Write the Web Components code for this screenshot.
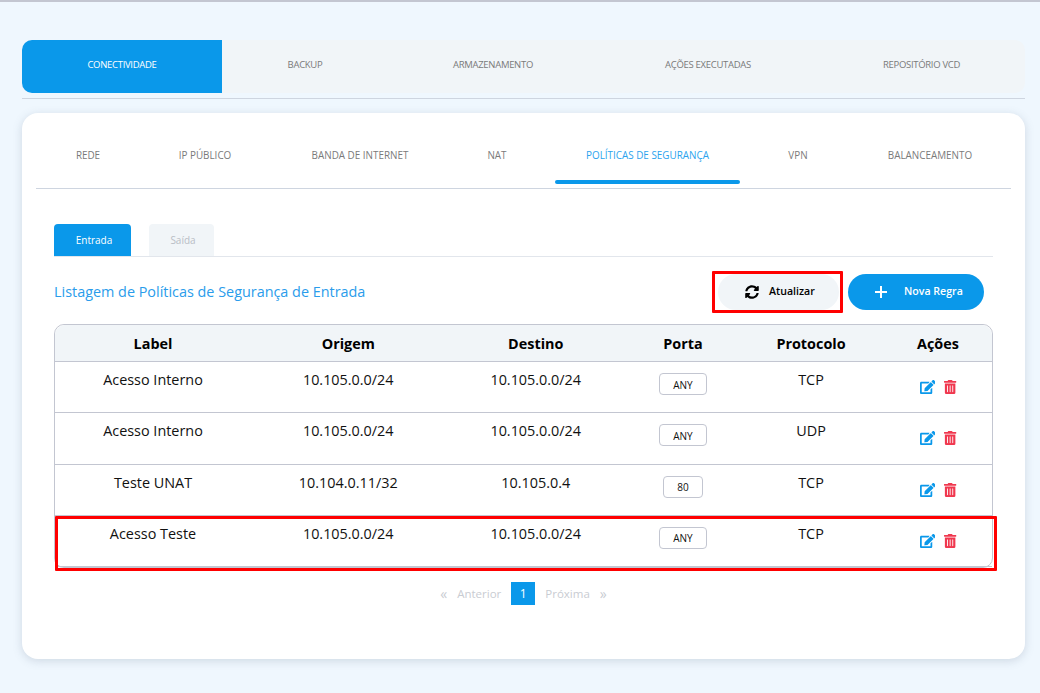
<!DOCTYPE html>
<html lang="pt-BR">
<head>
<meta charset="utf-8">
<title>Políticas de Segurança</title>
<style>
html, body { margin: 0; height: 100%; }
body { background: #eff7fe; font-family: "Open Sans", sans-serif; overflow: hidden; }
</style>
</head>
<body>
<app-shell>
    <main-tabs></main-tabs>
    <panel-card>
        <sub-tabs></sub-tabs>
        <div style="margin: 35px 18px 0 18px;">
            <mode-tabs></mode-tabs>
            <list-header title="Listagem de Políticas de Segurança de Entrada"></list-header>
            <rules-table></rules-table>
            <page-nav></page-nav>
        </div>
    </panel-card>
</app-shell>

<script>
'use strict';

const ICONS = {
    sync: `<svg viewBox="0 0 512 512" width="14" height="14"><path fill="currentColor" d="M370.72 133.28C339.458 104.008 298.888 87.962 255.848 88c-77.458.068-144.328 53.178-162.791 126.85-1.344 5.363-6.122 9.15-11.651 9.15H24.103c-7.498 0-13.194-6.807-11.807-14.176C33.933 94.924 134.813 8 256 8c66.448 0 126.791 26.136 171.315 68.685L463.03 40.97C478.149 25.851 504 36.559 504 57.941V192c0 13.255-10.745 24-24 24H345.941c-21.382 0-32.09-25.851-16.971-40.971l41.75-41.749zM32 296h134.059c21.382 0 32.09 25.851 16.971 40.971l-41.75 41.75c31.262 29.273 71.835 45.319 114.876 45.28 77.418-.07 144.315-53.144 162.787-126.849 1.344-5.363 6.122-9.15 11.651-9.15h57.304c7.498 0 13.194 6.807 11.807 14.176C478.067 417.076 377.187 504 256 504c-66.448 0-126.791-26.136-171.315-68.685L48.97 471.03C33.851 486.149 8 475.441 8 454.059V320c0-13.255 10.745-24 24-24z"/></svg>`,
    plus: `<svg viewBox="0 0 14 14" width="14" height="14"><path d="M7 1v12M1 7h12" stroke="currentColor" stroke-width="2" fill="none"/></svg>`,
    edit: `<svg viewBox="0 0 576 512" width="15.75" height="14"><path fill="currentColor" d="M402.6 83.2l90.2 90.2c3.8 3.8 3.8 10 0 13.8L274.4 405.6l-92.8 10.3c-12.4 1.4-22.9-9.1-21.5-21.5l10.3-92.8L388.8 83.2c3.8-3.8 10-3.8 13.8 0zm162-22.9l-48.8-48.8c-15.2-15.2-39.9-15.2-55.2 0l-35.4 35.4c-3.8 3.8-3.8 10 0 13.8l90.2 90.2c3.8 3.8 10 3.8 13.8 0l35.4-35.4c15.2-15.3 15.2-40 0-55.2zM384 346.2V448H64V128h229.8c3.2 0 6.2-1.3 8.5-3.5l40-40c7.6-7.6 2.2-20.5-8.5-20.5H48C21.5 64 0 85.5 0 112v352c0 26.5 21.5 48 48 48h352c26.5 0 48-21.5 48-48V306.2c0-10.7-12.9-16-20.5-8.5l-40 40c-2.2 2.3-3.5 5.3-3.5 8.5z"/></svg>`,
    trash: `<svg viewBox="0 0 448 512" width="12.25" height="14"><path fill="currentColor" d="M32 464a48 48 0 0 0 48 48h288a48 48 0 0 0 48-48V128H32zm272-256a16 16 0 0 1 32 0v224a16 16 0 0 1-32 0zm-96 0a16 16 0 0 1 32 0v224a16 16 0 0 1-32 0zm-96 0a16 16 0 0 1 32 0v224a16 16 0 0 1-32 0zM432 32H312l-9.4-18.7A24 24 0 0 0 281.1 0H166.8a23.72 23.72 0 0 0-21.4 13.3L136 32H16A16 16 0 0 0 0 48v32a16 16 0 0 0 16 16h416a16 16 0 0 0 16-16V48a16 16 0 0 0-16-16z"/></svg>`
};

const RULES = [
    ['Acesso Interno', '10.105.0.0/24', '10.105.0.0/24', 'ANY', 'TCP'],
    ['Acesso Interno', '10.105.0.0/24', '10.105.0.0/24', 'ANY', 'UDP'],
    ['Teste UNAT', '10.104.0.11/32', '10.105.0.4', '80', 'TCP'],
    ['Acesso Teste', '10.105.0.0/24', '10.105.0.0/24', 'ANY', 'TCP']
];

class AppShell extends HTMLElement {
    constructor() {
        super();
        this.attachShadow({mode: 'open'});
        this.shadowRoot.innerHTML = `
        <style>
        :host {
            display: block;
            border-top: 2px solid #c3c6d1;
            padding: 38px 15px 0 22px;
            color: #000;
            font-family: 'Open Sans', sans-serif;
        }
        </style>
        <slot></slot>
        `;
    }
}

class MainTabs extends HTMLElement {
    constructor() {
        super();
        this.attachShadow({mode: 'open'});
        const tabs = ['CONECTIVIDADE', 'BACKUP', 'ARMAZENAMENTO', 'AÇÕES EXECUTADAS', 'REPOSITÓRIO VCD'];
        this.shadowRoot.innerHTML = `
        <style>
        :host {
            display: block;
            padding-bottom: 5px;
            border-bottom: 1px solid #ced5e0;
            margin-bottom: 14px;
        }
        nav {
            display: grid;
            grid-template-columns: 200px 166px 210px 220px 207px;
            height: 53px;
            background: #f1f5f8;
            border-radius: 10px;
        }
        div {
            display: flex;
            align-items: center;
            justify-content: center;
            padding-bottom: 5px;
            font-size: 9.5px;
            letter-spacing: -0.3px;
            color: #7a7a7a;
        }
        .on {
            background: #0a98ea;
            color: #fff;
            border-radius: 10px 0 0 10px;
        }
        </style>
        <nav>${tabs.map((t, i) => `<div class="${i === 0 ? 'on' : ''}">${t}</div>`).join('')}</nav>
        `;
    }
}

class PanelCard extends HTMLElement {
    constructor() {
        super();
        this.attachShadow({mode: 'open'});
        this.shadowRoot.innerHTML = `
        <style>
        :host {
            display: block;
            height: 546px;
            box-sizing: border-box;
            padding: 8px 14px 0 14px;
            background: #fff;
            border-radius: 16px;
            box-shadow: 0 2px 10px rgba(90, 110, 130, .22);
        }
        </style>
        <slot></slot>
        `;
    }
}

class SubTabs extends HTMLElement {
    constructor() {
        super();
        this.attachShadow({mode: 'open'});
        const tabs = ['REDE', 'IP PÚBLICO', 'BANDA DE INTERNET', 'NAT', 'POLÍTICAS DE SEGURANÇA', 'VPN', 'BALANCEAMENTO'];
        this.shadowRoot.innerHTML = `
        <style>
        :host {
            display: grid;
            grid-template-columns: 104px 130px 180px 94px 11px 185px 116px 148px;
            height: 67px;
            border-bottom: 1px solid #ced5e0;
        }
        div {
            display: flex;
            align-items: center;
            justify-content: center;
            position: relative;
            font-size: 9.9px;
            color: #7a7a7a;
        }
        .on { color: #2ba3ee; grid-column: 6; }
        .on::after {
            content: '';
            position: absolute;
            left: 0;
            right: 0;
            bottom: 4px;
            height: 4px;
            border-radius: 2px;
            background: #0a98ea;
        }
        </style>
        ${tabs.map((t, i) => `<div class="${i === 4 ? 'on' : ''}">${t}</div>`).join('')}
        `;
    }
}

class ModeTabs extends HTMLElement {
    constructor() {
        super();
        this.attachShadow({mode: 'open'});
        this.shadowRoot.innerHTML = `
        <style>
        :host {
            display: flex;
            gap: 18px;
            height: 32px;
            border-bottom: 1px solid #e2e6ec;
        }
        div {
            display: flex;
            align-items: center;
            justify-content: center;
            box-sizing: border-box;
            padding-left: 3px;
            font-size: 10px;
            border-radius: 4px 4px 0 0;
        }
        .in { width: 77px; background: #0a98ea; color: #fff; }
        .out { width: 65px; background: #f1f5f8; color: #b9bec6; }
        </style>
        <div class="in">Entrada</div>
        <div class="out">Saída</div>
        `;
    }
}

class ListHeader extends HTMLElement {
    constructor() {
        super();
        this.attachShadow({mode: 'open'});
        this.shadowRoot.innerHTML = `
        <style>
        :host {
            display: flex;
            align-items: center;
            height: 36px;
            margin: 17px 0 14px 0;
            position: relative;
        }
        h2 {
            flex: 1;
            margin: 0 0 2px 0;
            font-size: 14.4px;
            font-weight: 400;
            color: #2a9ceb;
        }
        button {
            display: flex;
            align-items: center;
            height: 36px;
            border: 0;
            border-radius: 18px;
            font-family: inherit;
            font-size: 10.6px;
            font-weight: 600;
            padding: 0 0 2px 0;
        }
        .refresh {
            width: 121px;
            background: #f1f5f8;
            color: #000;
            margin-right: 9px;
            padding-left: 27px;
            gap: 10px;
        }
        .add {
            width: 136px;
            background: #0a98ea;
            color: #fff;
            margin-right: 9px;
            padding-left: 26px;
            gap: 16px;
        }
        svg { position: relative; top: 1px; }
        .mark {
            position: absolute;
            left: 658px;
            top: -3px;
            width: 125px;
            height: 36px;
            border: 3px solid #f00;
            border-radius: 1px;
        }
        </style>
        <h2>${this.getAttribute('title')}</h2>
        <button class="refresh">${ICONS.sync}<span>Atualizar</span></button>
        <button class="add">${ICONS.plus}<span>Nova Regra</span></button>
        <div class="mark"></div>
        `;
    }
}

class PortBadge extends HTMLElement {
    constructor() {
        super();
        this.attachShadow({mode: 'open'});
        this.shadowRoot.innerHTML = `
        <style>
        :host {
            display: inline-flex;
            align-items: center;
            justify-content: center;
            box-sizing: border-box;
            height: 22px;
            min-width: 40px;
            padding: 1px 13.5px 0 13.5px;
            border: 1px solid #c3c6d1;
            border-radius: 4px;
            font-size: 10px;
            line-height: 1;
        }
        </style>
        <slot></slot>
        `;
    }
}

class RulesTable extends HTMLElement {
    constructor() {
        super();
        this.attachShadow({mode: 'open'});
        const heads = ['Label', 'Origem', 'Destino', 'Porta', 'Protocolo', 'Ações'];
        const rows = RULES.map(r => `
            <div class="row">
                <div>${r[0]}</div>
                <div>${r[1]}</div>
                <div>${r[2]}</div>
                <div class="port"><port-badge>${r[3]}</port-badge></div>
                <div>${r[4]}</div>
                <div class="acts"><span class="edit">${ICONS.edit}</span><span class="trash">${ICONS.trash}</span></div>
            </div>`).join('');
        this.shadowRoot.innerHTML = `
        <style>
        :host {
            display: block;
            position: relative;
            border: 1px solid #c3c6d1;
            border-radius: 10px;
            font-size: 14.4px;
            color: #111;
        }
        .row, .head {
            display: grid;
            grid-template-columns: 196px 194.5px 180.5px 114px 142px 112px;
            text-align: center;
        }
        .head {
            height: 36px;
            align-items: center;
            background: #f1f5f8;
            border-radius: 10px 10px 0 0;
            font-weight: 700;
            color: #000;
            border-bottom: 1px solid #c3c6d1;
        }
        .row {
            box-sizing: border-box;
            height: 51.3px;
            padding-top: 8px;
            line-height: 20px;
            border-bottom: 1px solid #c3c6d1;
        }
        .row:last-of-type { border-bottom: 0; }
        .port { padding-top: 3px; line-height: 0; }
        .acts {
            display: flex;
            justify-content: center;
            gap: 9px;
            padding-top: 10px;
            line-height: 0;
        }
        .edit { color: #0a98ea; }
        .trash { color: #f0384f; }
        .mark {
            position: absolute;
            left: 0;
            top: 191px;
            width: 936px;
            height: 49px;
            border: 3px solid #f00;
            border-radius: 1px;
        }
        </style>
        <div class="head">${heads.map(h => `<div>${h}</div>`).join('')}</div>
        ${rows}
        <div class="mark"></div>
        `;
    }
}

class PageNav extends HTMLElement {
    constructor() {
        super();
        this.attachShadow({mode: 'open'});
        this.shadowRoot.innerHTML = `
        <style>
        :host {
            display: flex;
            align-items: center;
            justify-content: center;
            height: 23px;
            margin-top: 14px;
            font-size: 11.5px;
            color: #c9ccd2;
        }
        span { padding-bottom: 1px; }
        .cur {
            display: flex;
            align-items: center;
            justify-content: center;
            width: 24px;
            height: 23px;
            margin: 0 10px;
            padding: 0;
            background: #0a98ea;
            color: #fff;
            font-size: 12px;
        }
        .a, .p { font-size: 14px; }
        .a { margin-right: 10px; }
        .p { margin-left: 10px; }
        </style>
        <span class="a">«</span><span>Anterior</span>
        <span class="cur">1</span>
        <span>Próxima</span><span class="p">»</span>
        `;
    }
}

window.customElements.define('app-shell', AppShell);
window.customElements.define('main-tabs', MainTabs);
window.customElements.define('panel-card', PanelCard);
window.customElements.define('sub-tabs', SubTabs);
window.customElements.define('mode-tabs', ModeTabs);
window.customElements.define('list-header', ListHeader);
window.customElements.define('port-badge', PortBadge);
window.customElements.define('rules-table', RulesTable);
window.customElements.define('page-nav', PageNav);
</script>
</body>
</html>
